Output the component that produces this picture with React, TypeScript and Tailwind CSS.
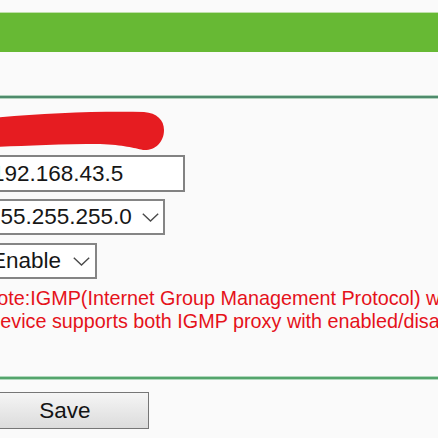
const Chevron = ({ className }: { className?: string }) => (
  <svg viewBox="0 0 17 9" width={17} height={9} className={className} fill="none">
    <polyline points="0.8,0.8 8.5,8 16.2,0.8" stroke="#4a4a4a" strokeWidth={1.4} />
  </svg>
);

const Rule = ({ tone }: { tone: string }) => (
  <div className={`h-[4px] w-full border-y ${tone}`} />
);

export default function App() {
  return (
    <div className="h-[438px] w-[438px] overflow-hidden bg-[#fafafa] pt-[12px] font-['Liberation_Sans',Arial,sans-serif]">
      <div className="h-[40px] w-full border-t border-[#bfe0aa] bg-[#67b934]" />

      <div className="mt-[43px]">
        <Rule tone="border-[#b3d4bf] bg-[#4f8b6c]" />
      </div>

      <svg width={170} height={42} viewBox="0 110 170 42" className="mt-[11px] block">
        <path
          d="M -6 118 C 40 113, 100 111, 144 112 C 157 113, 164 120, 164 130 C 164 143, 154 151, 143 150 C 134 148, 124 145, 100 144 C 60 144, 20 146, -6 147 Z"
          fill="#e61c21"
        />
      </svg>

      <div className="ml-[-15px] mt-[3px] flex flex-col items-start text-[22.5px] text-[#161616]">
        <div className="flex h-[37px] w-[200px] items-center border-2 border-[#828282] bg-white pl-[5px]">
          192.168.43.5
        </div>

        <div className="mt-[7px] flex h-[36px] w-[180px] items-center border-2 border-[#858585] bg-white pl-[1px]">
          <span>255.255.255.0</span>
          <Chevron className="ml-auto mr-[4px]" />
        </div>

        <div className="mt-[8px] flex h-[36px] w-[112px] items-center border-2 border-[#858585] bg-white pl-[4px]">
          <span>Enable</span>
          <Chevron className="ml-auto mr-[5px]" />
        </div>

        <div className="mt-[8px] whitespace-nowrap text-[19.8px] leading-[23px] text-[#e5121a]">
          <p className="ml-[-2px]">Note:IGMP(Internet Group Management Protocol) will be used for multicast</p>
          <p className="ml-[1px]">Device supports both IGMP proxy with enabled/disabled snooping</p>
        </div>
      </div>

      <div className="mt-[43px]">
        <Rule tone="border-[#b0d9bd] bg-[#54a46c]" />
      </div>

      <button className="ml-[-19px] mt-[12px] flex h-[37px] w-[168px] items-center justify-center border border-[#767676] bg-gradient-to-b from-[#f5f5f5] to-[#dcdcdc] text-[22.5px] text-[#141414]">
        Save
      </button>
    </div>
  );
}
